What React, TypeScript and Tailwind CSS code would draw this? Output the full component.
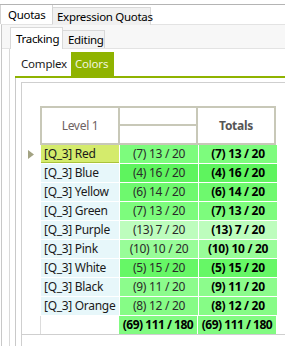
import React from "react";

type Row = {
  name: string;
  a: string;
  b: string;
  bg: string;
  sel?: boolean;
};

const rows: Row[] = [
  { name: "[Q_3] Red", a: "(7)", b: "13 / 20", bg: "bg-[#7dfc7d]", sel: true },
  { name: "[Q_3] Blue", a: "(4)", b: "16 / 20", bg: "bg-[#5ef45e]" },
  { name: "[Q_3] Yellow", a: "(6)", b: "14 / 20", bg: "bg-[#6ef96e]" },
  { name: "[Q_3] Green", a: "(7)", b: "13 / 20", bg: "bg-[#7dfc7d]" },
  { name: "[Q_3] Purple", a: "(13)", b: "7 / 20", bg: "bg-[#bdfdbd]" },
  { name: "[Q_3] Pink", a: "(10)", b: "10 / 20", bg: "bg-[#98fd98]" },
  { name: "[Q_3] White", a: "(5)", b: "15 / 20", bg: "bg-[#66f766]" },
  { name: "[Q_3] Black", a: "(9)", b: "11 / 20", bg: "bg-[#8cfc8c]" },
  { name: "[Q_3] Orange", a: "(8)", b: "12 / 20", bg: "bg-[#86fc86]" },
];

export default function App() {
  return (
    <div className="w-[285px] h-[346px] overflow-hidden bg-white text-[12px] leading-none text-[#1a1a1a] font-['Noto_Sans',sans-serif]">
      {/* top tab strip */}
      <div className="h-[4px]" />
      <div className="flex h-[20px] border-t border-[#b4b4b4] text-[11.5px] tracking-[-0.3px]">
        <div className="w-[53px] bg-white border-l border-r border-[#d4d4d4] pl-[7px] flex items-center text-black">
          Quotas
        </div>
        <div className="mt-[2px] h-[18px] w-[98px] pl-[4px] bg-[#f0f0f0] border-t border-r border-[#d9d9d9] flex items-center text-black whitespace-nowrap">
          Expression Quotas
        </div>
      </div>

      {/* outer panel */}
      <div className="flex flex-col h-[322px] ml-[1px] border-l border-[#c8c8c8] border-t border-t-[#e3e3e3]">
        {/* second tab strip */}
        <div className="h-[24px] bg-[#f7f7f7] border-b border-[#e3e3e3] flex items-end pl-[8px] text-[11.5px] tracking-[-0.3px]">
          <div className="h-[22px] -mb-px w-[53px] bg-white border-l border-t border-r border-[#d9d9d9] flex items-center pl-[5px] text-black">
            Tracking
          </div>
          <div className="h-[18px] w-[42px] bg-[#f3f3f3] border-t border-r border-[#d9d9d9] flex items-center pl-[5px] text-black">
            Editing
          </div>
        </div>

        {/* inner panel */}
        <div className="flex-1 ml-[7px] border-l border-[#d9d9d9] pl-[5px] flex flex-col">
          {/* third tab strip */}
          <div className="h-[29px] flex items-end border-b-2 border-[#8fb300] text-[11.5px] tracking-[-0.2px]">
            <div className="h-[24px] w-[56px] bg-white flex items-center pl-[6px] text-[#1a1a1a]">
              Complex
            </div>
            <div className="h-[24px] w-[43px] bg-[#8fb300] flex items-center pl-[4px] text-[#f2f5dc]">
              Colors
            </div>
          </div>

          {/* grid panel */}
          <div className="flex-1 border-l border-[#c9c9c9] pl-[5px] pt-[4px] flex flex-col">
            <div className="flex-1 border-l border-t border-[#cfcfcf] flex flex-col tracking-[-0.3px]">
              {/* group area */}
              <div className="h-[23px]" />
              {/* header */}
              <div className="flex h-[39px]">
                <div className="w-[18px]" />
                <div className="flex bg-[#c8c8b8] p-[2px] gap-[2px]">
                  <div className="w-[76px] bg-white flex items-center justify-center text-[#6e6262]">
                    Level 1
                  </div>
                  <div className="w-[76px] flex flex-col gap-[2px]">
                    <div className="h-[16px] bg-white" />
                    <div className="flex-1 bg-white" />
                  </div>
                  <div className="w-[76px] bg-white flex items-center justify-center font-bold text-[#555555]">
                    Totals
                  </div>
                </div>
              </div>
              {/* data rows */}
              <div className="flex flex-col">
                {rows.map((r) => (
                  <div key={r.name} className="flex h-[19px] gap-[1px] border-b border-white">
                    <div className="w-[18px] flex items-center justify-center">
                      {r.sel ? (
                        <svg width="6" height="9" viewBox="0 0 6 9">
                          <polygon points="0,0 6,4.5 0,9" fill="#a3a383" />
                        </svg>
                      ) : null}
                    </div>
                    <div
                      className={
                        r.sel
                          ? "w-[78px] bg-[#d4eb6c] border-b border-[#a9c43a] flex items-center pl-[3px] whitespace-nowrap"
                          : "w-[78px] bg-[#e7f7fa] flex items-center pl-[3px] whitespace-nowrap"
                      }
                    >
                      {r.name}
                    </div>
                    <div className={`w-[78px] ${r.bg} flex items-center justify-center whitespace-nowrap text-[#2a2a2a]`}>
                      {r.a} {r.b}
                    </div>
                    <div className={`w-[78px] ${r.bg} flex items-center justify-center whitespace-nowrap font-bold text-black`}>
                      {r.a} {r.b}
                    </div>
                  </div>
                ))}
                {/* total row */}
                <div className="flex h-[19px] gap-[1px] border-b border-[#cfcfcf]">
                  <div className="w-[18px]" />
                  <div className="w-[78px] border-l border-[#dcdcdc] -ml-px" />
                  <div className="w-[78px] bg-[#82fb82] flex items-center justify-center whitespace-nowrap font-bold text-black tracking-[-0.5px]">
                    (69) 111 / 180
                  </div>
                  <div className="w-[78px] bg-[#82fb82] flex items-center justify-center whitespace-nowrap font-bold text-black tracking-[-0.5px]">
                    (69) 111 / 180
                  </div>
                </div>
              </div>
            </div>
          </div>
        </div>
      </div>
    </div>
  );
}
